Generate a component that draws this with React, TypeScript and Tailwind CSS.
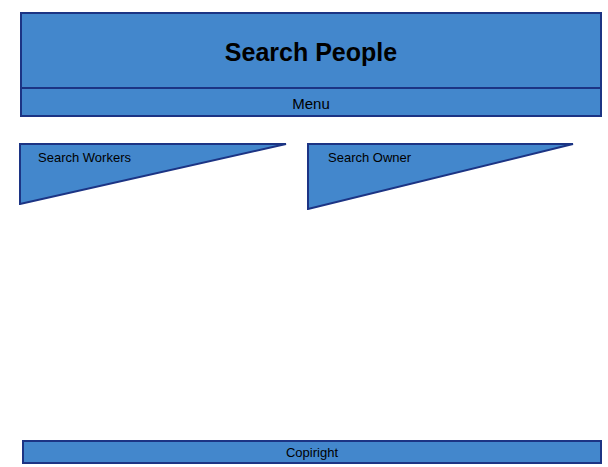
const panels = [
  { label: "Search Workers", width: 268, height: 62, textX: "pl-[19px]" },
  { label: "Search Owner", width: 267, height: 67, textX: "pl-[21px]" },
]

function Pennant({ label, width, height, textX }: { label: string; width: number; height: number; textX: string }) {
  return (
    <div className="relative" style={{ width, height }}>
      <svg width={width} height={height} className="absolute inset-0">
        <polygon
          points={`1,1 ${width - 1},1 1,${height - 1}`}
          fill="#4387cc"
          stroke="#1c3484"
          strokeWidth="2"
          strokeLinejoin="miter"
        />
      </svg>
      <div className={`relative pt-[5px] ${textX} text-[13px] text-black`}>{label}</div>
    </div>
  )
}

export default function App() {
  return (
    <div className="h-[467px] bg-white flex flex-col font-['Liberation_Sans',Arial,sans-serif]">
      {/* Header */}
      <header className="mt-[12px] ml-[20px] w-[582px] border-2 border-[#1c3484] bg-[#4387cc]">
        <div className="h-[75px] pt-[4px] flex items-center justify-center border-b-2 border-[#1c3484]">
          <h1 className="text-[25px] font-bold text-black">Search People</h1>
        </div>
        <div className="h-[26px] pt-[4px] flex items-center justify-center text-[15px] text-black">Menu</div>
      </header>

      {/* Search panels */}
      <div className="mt-[26px] ml-[19px] flex gap-[20px] items-start">
        {panels.map((p) => (
          <Pennant key={p.label} {...p} />
        ))}
      </div>

      {/* Footer */}
      <footer className="mt-auto mb-[3px] ml-[22px] w-[580px] h-[24px] pt-[2px] border-2 border-[#1c3484] bg-[#4387cc] flex items-center justify-center text-[13px] text-black">
        Copiright
      </footer>
    </div>
  )
}
